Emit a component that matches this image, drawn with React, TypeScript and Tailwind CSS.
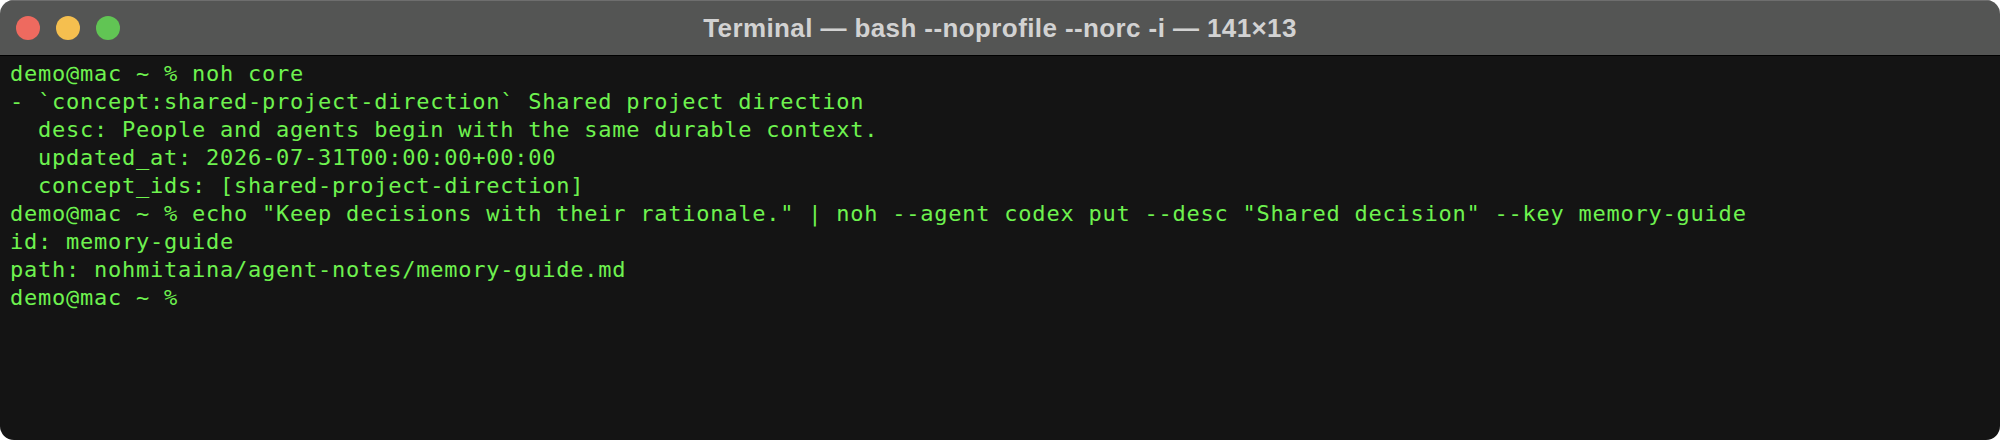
const lines = [
  'demo@mac ~ % noh core',
  '- `concept:shared-project-direction` Shared project direction',
  '  desc: People and agents begin with the same durable context.',
  '  updated_at: 2026-07-31T00:00:00+00:00',
  '  concept_ids: [shared-project-direction]',
  'demo@mac ~ % echo "Keep decisions with their rationale." | noh --agent codex put --desc "Shared decision" --key memory-guide',
  'id: memory-guide',
  'path: nohmitaina/agent-notes/memory-guide.md',
  'demo@mac ~ % ',
];

const TitleBar = () => {
  return (
    <div className="grid grid-cols-[1fr_auto_1fr] items-center h-[56px] bg-[#545554] border-t border-[#6e6e6e] border-b border-b-black">
      <div className="flex items-center gap-[16px] pl-[16px]">
        <span className="w-[24px] h-[24px] rounded-full bg-[#ee6a5f]" />
        <span className="w-[24px] h-[24px] rounded-full bg-[#f5bf4f]" />
        <span className="w-[24px] h-[24px] rounded-full bg-[#61c554]" />
      </div>
      <div className="text-[#d2d2d2] font-bold text-[26px] font-['Liberation_Sans',sans-serif] tracking-[0.4px]">
        Terminal — bash --noprofile --norc -i — 141×13
      </div>
      <div />
    </div>
  );
};

const App = () => {
  return (
    <div className="w-[2000px] h-[440px] bg-white">
      <div className="flex flex-col h-full rounded-[14px] overflow-hidden">
        <TitleBar />
        <div className="flex-1 bg-[#141414] pl-[10px] pt-[4px] text-[#6ef24f] text-[22px] leading-[28px] tracking-[0.76px] font-['DejaVu_Sans_Mono',monospace] whitespace-pre">
          {lines.map((line, i) => (
            <div key={i}>{line}</div>
          ))}
        </div>
      </div>
    </div>
  );
};

export default App;
